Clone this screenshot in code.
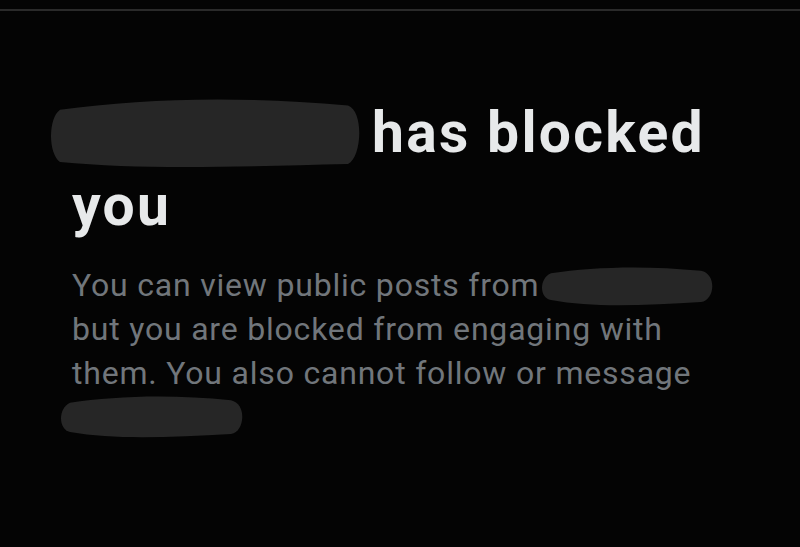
function Redaction({ width, height, className }: { width: number; height: number; className?: string }) {
  // scribbled-out name, drawn as a soft irregular blob
  const w = width;
  const h = height;
  const d = `M10 ${h * 0.18} C ${w * 0.3} ${h * 0.02}, ${w * 0.6} ${h * -0.02}, ${w - 14} ${h * 0.12} C ${w + 2} ${h * 0.2}, ${w} ${h * 0.85}, ${w - 14} ${h - 4} C ${w * 0.6} ${h * 0.98}, ${w * 0.3} ${h + 2}, 10 ${h - 6} C -2 ${h * 0.8}, -2 ${h * 0.3}, 10 ${h * 0.18} Z`;
  return (
    <svg width={w} height={h} viewBox={`0 0 ${w} ${h}`} className={className} aria-hidden>
      <path d={d} fill="#262626" />
    </svg>
  );
}

export default function App() {
  return (
    <div className="min-h-[547px] w-[800px] bg-[#040404] font-['Roboto',sans-serif]">
      <div className="pt-[9px]">
        <div className="h-[2px] bg-[#2a2a2a]" />
      </div>

      <div className="pl-[72px] pr-[20px] pt-[85px]">
        <h1 className="text-[57px] font-bold leading-[73px] tracking-[2.3px] text-[#e7e9ea]">
          <Redaction width={312} height={71} className="-ml-[22px] mr-[10px] inline-block align-[-16px]" />
          has blocked
          <br />
          you
        </h1>

        <p className="mt-[21px] text-[32px] leading-[44px] tracking-[0.8px] text-[#71767b]">
          You can view public posts from
          <Redaction width={174} height={40} className="ml-[2px] inline-block align-[-10px]" />
          <br />
          but you are blocked from engaging with
          <br />
          them. You also cannot follow or message
          <br />
          <Redaction width={185} height={43} className="-ml-[12px] inline-block align-[-8px]" />
        </p>
      </div>
    </div>
  );
}
